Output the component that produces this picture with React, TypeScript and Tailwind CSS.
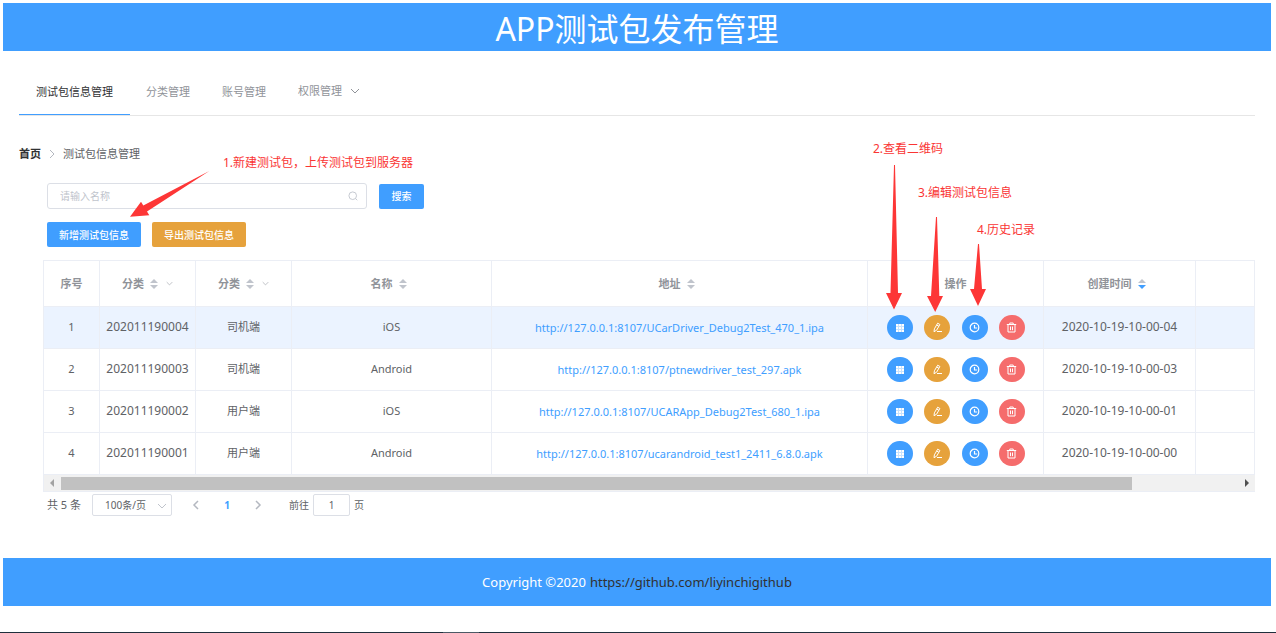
import React from "react";

type Pkg = { id: string; kind: string; name: string; url: string; time: string };

const rows: Pkg[] = [
  { id: "202011190004", kind: "司机端", name: "iOS", url: "http://127.0.0.1:8107/UCarDriver_Debug2Test_470_1.ipa", time: "2020-10-19-10-00-04" },
  { id: "202011190003", kind: "司机端", name: "Android", url: "http://127.0.0.1:8107/ptnewdriver_test_297.apk", time: "2020-10-19-10-00-03" },
  { id: "202011190002", kind: "用户端", name: "iOS", url: "http://127.0.0.1:8107/UCARApp_Debug2Test_680_1.ipa", time: "2020-10-19-10-00-01" },
  { id: "202011190001", kind: "用户端", name: "Android", url: "http://127.0.0.1:8107/ucarandroid_test1_2411_6.8.0.apk", time: "2020-10-19-10-00-00" },
];

const DOWN = "M1 3l4 4 4-4";
const LEFT = "M7 1L3 5l4 4";
const RIGHT = "M3 1l4 4-4 4";

function Chevron({ className, d = DOWN }: { className: string; d?: string }) {
  return (
    <svg viewBox="0 0 10 10" className={className} fill="none" stroke="currentColor" aria-hidden="true">
      <path d={d} />
    </svg>
  );
}

function Sort({ desc = false }: { desc?: boolean }) {
  return (
    <svg viewBox="0 0 8 10" className="h-[10px] w-2" aria-hidden="true">
      <path d="M0 4L4 0l4 4z" fill="#c0c4cc" />
      <path d="M0 6h8L4 10z" fill={desc ? "#409eff" : "#c0c4cc"} />
    </svg>
  );
}

function GridIcon() {
  return (
    <svg viewBox="0 0 12 12" className="size-3" fill="currentColor" aria-hidden="true">
      <path d="M2 2h8v8H2z" opacity="0.7" />
      <path d="M2 2h2v2H2zM5 2h2v2H5zM8 2h2v2H8zM2 5h2v2H2zM5 5h2v2H5zM8 5h2v2H8zM2 8h2v2H2zM5 8h2v2H5zM8 8h2v2H8z" />
    </svg>
  );
}

function EditIcon() {
  return (
    <svg viewBox="0 0 11 11" className="size-[11px]" fill="none" stroke="currentColor" aria-hidden="true">
      <path d="M5.700 1.200l2.200 1.300-3.300 5.700-2.600 1.500.4-2.900zM4.700 3l2.200 1.300M5 9.500h5" />
    </svg>
  );
}

function ClockIcon() {
  return (
    <svg viewBox="0 0 11 11" className="size-[11px]" fill="none" stroke="currentColor" strokeWidth="1.2" aria-hidden="true">
      <circle cx="5.5" cy="5.5" r="4.3" />
      <path d="M5.500 3v3h2.700" />
    </svg>
  );
}

function TrashIcon() {
  return (
    <svg viewBox="0 0 11 11" className="size-[11px]" fill="none" stroke="currentColor" aria-hidden="true">
      <path d="M.8 2.500h9.400M3.800 2.500v-1.500h3.400v1.500M2 2.500v7.500h7v-7.500M4.500 4.500v3.700M6.500 4.500v3.700" />
    </svg>
  );
}

const round = "flex h-[25px] w-[26px] items-center justify-center rounded-full text-white";

function Actions() {
  return (
    <div className="ml-[19px] flex w-[138px] justify-between">
      <button aria-label="查看二维码" className={`${round} bg-[#409eff]`}><GridIcon /></button>
      <button aria-label="编辑" className={`${round} bg-[#e6a23c]`}><EditIcon /></button>
      <button aria-label="历史记录" className={`${round} bg-[#409eff]`}><ClockIcon /></button>
      <button aria-label="删除" className={`${round} bg-[#f56c6c]`}><TrashIcon /></button>
    </div>
  );
}

function Head({ text, sort, desc, filter }: { text?: string; sort?: boolean; desc?: boolean; filter?: boolean }) {
  return (
    <th className="h-[46px] border-r border-b border-[#ebeef5] p-0 text-[11px] font-bold">
      <span className="flex items-center justify-center">
        {text}
        {sort && <span className={filter ? "ml-[6px]" : "mx-[6px]"}><Sort desc={desc} /></span>}
        {filter && <Chevron className="ml-2 size-[7px] text-[#a6a9b0]" />}
      </span>
    </th>
  );
}

const cell = "h-[42px] border-r border-b border-[#ebeef5] p-0";
const textCell = "h-[42px] border-r border-b border-[#ebeef5] px-0 pt-0 pb-[2px]";
const note = "absolute text-xs leading-4 whitespace-nowrap text-[#fa3534]";

function Notes() {
  return (
    <div className="pointer-events-none absolute top-0 left-0">
      <svg width="1276" height="320" viewBox="0 0 1276 320" fill="#fd3636" aria-hidden="true">
        <path d="M209.300 171L147 211.500L149.300 215.300L130 216.700L141 201.700L143.300 205.500z" />
        <path d="M894 165H895L898 293H902L894 309.500L886 293H890.500z" />
        <path d="M936 217H937L939.300 296H943L935.200 312L927 296H931z" />
        <path d="M978 244H979L982 289H986L978 306L970 289H974z" />
      </svg>
      <span className={`${note} top-[155px] left-[223px]`}>1.新建测试包，上传测试包到服务器</span>
      <span className={`${note} top-[141px] left-[873px]`}>2.查看二维码</span>
      <span className={`${note} top-[185px] left-[918px]`}>3.编辑测试包信息</span>
      <span className={`${note} top-[222px] left-[977px]`}>4.历史记录</span>
    </div>
  );
}

export default function App() {
  return (
    <div className="relative bg-white font-['Noto_Sans','Noto_Sans_CJK_SC',sans-serif] text-[11px] leading-4 text-[#606266]">
      <div className="pt-[3px] pr-[5px] pl-[3px]">
        <header className="flex h-12 items-center justify-center bg-[#409eff] pt-[3px]">
          <h1 className="text-[32px] leading-[45px] text-white">APP测试包发布管理</h1>
        </header>

        <main className="px-4 pt-4">
          <nav className="flex h-[49px] border-b border-[#e6e6e6] text-[#909399]">
            <a href="#packages" className="flex h-12 w-[111px] items-center justify-center border-b border-[#409eff] pt-[2px] text-[#303133]">测试包信息管理</a>
            <a href="#kinds" className="flex h-12 items-center px-4 pt-[2px]">分类管理</a>
            <a href="#accounts" className="flex h-12 items-center px-4 pt-[2px]">账号管理</a>
            <button className="flex h-12 items-center gap-2 px-4">
              权限管理
              <Chevron className="size-[10px]" />
            </button>
          </nav>

          <div className="mt-[30px] flex items-center">
            <a href="#home" className="font-bold text-[#303133]">首页</a>
            <Chevron d={RIGHT} className="mx-[6px] size-[10px] text-[#b4b8c0]" />
            <span>测试包信息管理</span>
          </div>

          <form className="mt-[21px] ml-7 flex items-center gap-3" onSubmit={(e) => e.preventDefault()}>
            <label className="flex h-[26px] w-80 items-center rounded-[3px] border border-[#dcdfe6] px-3 text-[#c0c4cc]">
              <input aria-label="名称" placeholder="请输入名称" className="min-w-0 grow text-[10px] text-[#606266] outline-none placeholder:text-[#c0c4cc]" />
              <svg viewBox="0 0 11 11" className="-mr-1 size-[10px]" fill="none" stroke="currentColor" aria-hidden="true">
                <circle cx="5.200" cy="5.200" r="4.200" />
                <path d="M8.200 8.200l2 2" />
              </svg>
            </label>
            <button className="h-[25px] w-[45px] rounded-[2px] bg-[#409eff] text-[10px] font-medium text-white">搜索</button>
          </form>

          <div className="mt-[13px] ml-7 flex gap-[11px]">
            <button className="h-[25px] w-[94px] rounded-[2px] bg-[#409eff] text-[10px] font-medium text-white">新增测试包信息</button>
            <button className="h-[25px] w-[94px] rounded-[2px] bg-[#e6a23c] text-[10px] font-medium text-white">导出测试包信息</button>
          </div>

          <section className="mt-[13px] ml-6 border-t border-l border-[#ebeef5]">
            <table className="w-full table-fixed border-separate border-spacing-0 text-center">
              <colgroup>
                <col className="w-14" />
                <col className="w-24" />
                <col className="w-24" />
                <col className="w-[200px]" />
                <col className="w-[376px]" />
                <col className="w-44" />
                <col className="w-[152px]" />
                <col />
              </colgroup>
              <thead className="text-[#909399]">
                <tr>
                  <Head text="序号" />
                  <Head text="分类" sort filter />
                  <Head text="分类" sort filter />
                  <Head text="名称" sort />
                  <Head text="地址" sort />
                  <Head text="操作" />
                  <Head text="创建时间" sort desc />
                  <Head />
                </tr>
              </thead>
              <tbody>
                {rows.map((r, i) => (
                  <tr key={r.id} className={i === 0 ? "bg-[#ebf3ff]" : "bg-white"}>
                    <td className={textCell}>{i + 1}</td>
                    <td className={`${textCell} text-xs`}>{r.id}</td>
                    <td className={textCell}>{r.kind}</td>
                    <td className={textCell}>{r.name}</td>
                    <td className={cell}><a href={r.url} className="text-[#409eff]">{r.url}</a></td>
                    <td className={cell}><Actions /></td>
                    <td className={`${textCell} text-xs`}>{r.time}</td>
                    <td className={cell} />
                  </tr>
                ))}
              </tbody>
            </table>
            <div className="flex h-[17px] items-center border-b border-[#ebeef5] bg-[#f1f1f1]">
              <svg viewBox="0 0 17 8" className="h-2 w-[17px]" fill="#a3a3a3" aria-hidden="true"><path d="M10 0v8L6 4z" /></svg>
              <div className="grow">
                <div className="h-[13px] w-[91%] bg-[#c1c1c1]" />
              </div>
              <svg viewBox="0 0 17 8" className="h-2 w-[17px]" fill="#505050" aria-hidden="true"><path d="M7 0v8l4-4z" /></svg>
            </div>
          </section>

          <div className="mt-[2px] ml-7 flex h-[22px] items-center text-[10px]">
            <span className="w-[45px] text-[11px]">共 5 条</span>
            <div className="relative">
              <select aria-label="每页条数" className="h-[22px] w-20 appearance-none rounded-[2px] border border-[#dcdfe6] bg-white pl-3 outline-none">
                <option>100条/页</option>
              </select>
              <Chevron className="pointer-events-none absolute top-[7px] right-[5px] size-[10px] text-[#c0c4cc]" />
            </div>
            <button aria-label="上一页" className="ml-[19px] text-[#b4b8c0]"><Chevron d={LEFT} className="size-[10px] stroke-[1.5]" /></button>
            <button className="mx-[21px] w-[10px] font-bold text-[#409eff]">1</button>
            <button aria-label="下一页" className="text-[#b4b8c0]"><Chevron d={RIGHT} className="size-[10px] stroke-[1.5]" /></button>
            <label className="ml-[26px] flex items-center gap-1">
              前往
              <input defaultValue="1" className="h-[22px] w-[37px] rounded-[2px] border border-[#dcdfe6] text-center outline-none" />
              页
            </label>
          </div>
        </main>

        <footer className="mt-[42px] flex h-12 items-center justify-center gap-1 bg-[#409eff] text-[13px] text-white">
          <span>Copyright ©2020</span>
          <a href="https://github.com/liyinchigithub" className="text-[#303133]">https://github.com/liyinchigithub</a>
        </footer>
      </div>
      <div className="mt-[26px] flex h-px bg-[#1f2f3d]">
        <div className="ml-[443px] w-9 bg-[#4c5a66]" />
      </div>
      <Notes />
    </div>
  );
}
